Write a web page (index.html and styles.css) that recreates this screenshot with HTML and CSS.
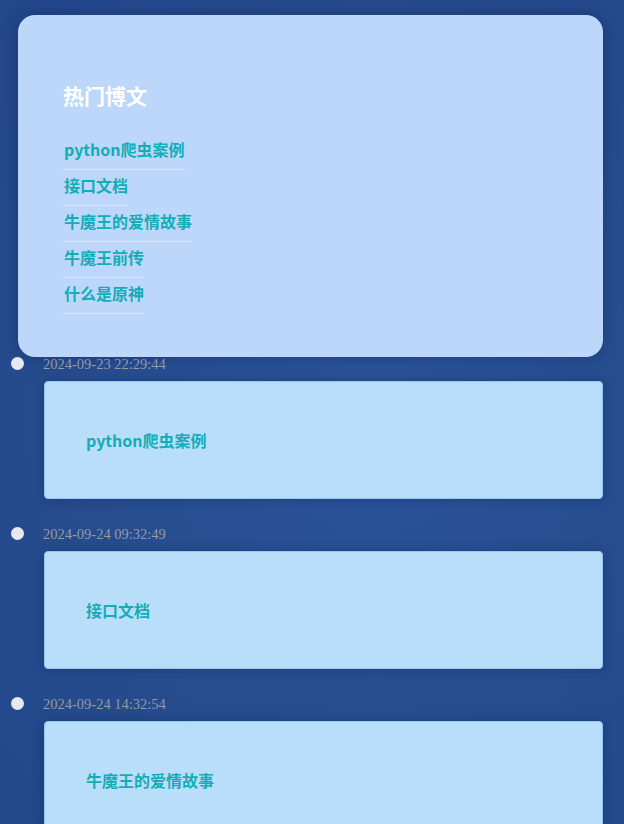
FILE: index.html
```html
<!DOCTYPE html>
<html lang="zh-CN">
<head>
<meta charset="utf-8">
<title>热门博文</title>
<link rel="stylesheet" href="styles.css">
</head>
<body>
<div class="page">
  <section class="hot">
    <h2 class="hot-title">热门博文</h2>
    <ul class="hot-list">
      <li><a class="hot-link" href="#">python爬虫案例</a></li>
      <li><a class="hot-link" href="#">接口文档</a></li>
      <li><a class="hot-link" href="#">牛魔王的爱情故事</a></li>
      <li><a class="hot-link" href="#">牛魔王前传</a></li>
      <li><a class="hot-link" href="#">什么是原神</a></li>
    </ul>
  </section>
  <ul class="timeline">
    <li class="tl-item">
      <span class="tl-dot"></span>
      <div class="tl-body">
        <div class="tl-date">2024-09-23 22:29:44</div>
        <div class="tl-card"><a class="tl-link" href="#">python爬虫案例</a></div>
      </div>
    </li>
    <li class="tl-item">
      <span class="tl-dot"></span>
      <div class="tl-body">
        <div class="tl-date">2024-09-24 09:32:49</div>
        <div class="tl-card"><a class="tl-link" href="#">接口文档</a></div>
      </div>
    </li>
    <li class="tl-item">
      <span class="tl-dot"></span>
      <div class="tl-body">
        <div class="tl-date">2024-09-24 14:32:54</div>
        <div class="tl-card"><a class="tl-link" href="#">牛魔王的爱情故事</a></div>
      </div>
    </li>
  </ul>
</div>
</body>
</html>
```

FILE: styles.css
```css
* { box-sizing: border-box; }
html, body {
  margin: 0;
  padding: 0;
}
body {
  background: #274e91;
  font-family: "Noto Sans CJK SC", "Noto Sans", sans-serif;
}
.page {
  padding: 15px 21px 0 18px;
  min-height: 824px;
  background: radial-gradient(ellipse at 60% 50%, #2a5398 0%, #264c8e 60%, #22478a 100%);
}
.hot {
  background: #bcd7fa;
  border-radius: 17px;
  padding: 66px 45px 43px;
  box-shadow: 0 0 14px rgba(10, 25, 70, 0.35);
}
.hot-title {
  margin: 0 0 25px;
  color: #ffffff;
  font-size: 21px;
  line-height: 28px;
  font-weight: 700;
}
.hot-list {
  list-style: none;
  margin: 0;
  padding: 0;
  display: flex;
  flex-direction: column;
  align-items: flex-start;
}
.hot-link {
  display: inline-block;
  color: #12adb8;
  font-size: 16px;
  font-weight: 700;
  line-height: 24px;
  padding: 3px 0 8px 1px;
  text-decoration: none;
  border-bottom: 1px solid rgba(225, 238, 255, 0.75);
}
.timeline {
  list-style: none;
  margin: 0 0 0 -7px;
  padding: 0;
}
.tl-item {
  display: flex;
  gap: 20px;
  margin-bottom: 28px;
}
.tl-dot {
  flex: none;
  width: 13px;
  height: 13px;
  border-radius: 50%;
  background: #e7e9f1;
}
.tl-body {
  flex: 1;
  min-width: 0;
}
.tl-date {
  font-family: "Liberation Serif", "Times New Roman", serif;
  font-size: 14.5px;
  line-height: 15px;
  color: #9499a4;
  margin-left: -1px;
}
.tl-card {
  margin-top: 9px;
  height: 118px;
  background: #b9def9;
  border: 1px solid #93c6f3;
  border-radius: 4px;
  display: flex;
  align-items: center;
  padding: 0 40px 1px 41px;
  box-shadow: 0 0 12px rgba(10, 25, 70, 0.3);
}
.tl-link {
  color: #12adb8;
  font-size: 16px;
  font-weight: 700;
  line-height: 24px;
  text-decoration: none;
}
```
